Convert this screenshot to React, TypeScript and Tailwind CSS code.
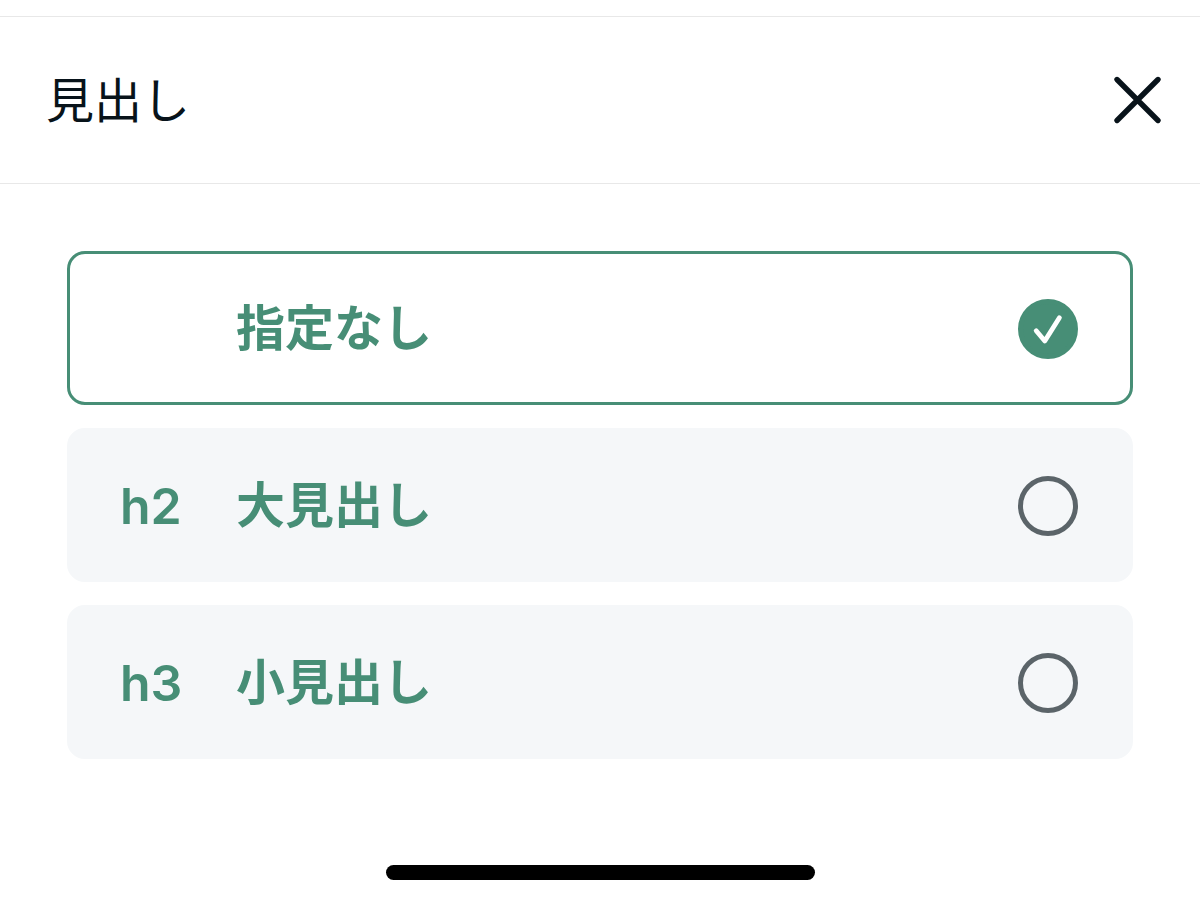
import { useState } from 'react'

const options = [
  { value: 'none', tag: '', label: '指定なし' },
  { value: 'h2', tag: 'h2', label: '大見出し' },
  { value: 'h3', tag: 'h3', label: '小見出し' }
]

export default function App() {
  const [selected, setSelected] = useState('none')
  const [open, setOpen] = useState(true)

  if (!open) return null

  return (
    <div className="flex min-h-screen flex-col bg-white pt-4 font-['Inter','Noto_Sans_CJK_JP',sans-serif]">
      <header className="flex h-[168px] items-center justify-between border-y border-[#e8e8e8] pr-8 pl-[46px]">
        <h1 className="pt-0.5 text-[48px] leading-[72px] font-normal text-[#08131a]">見出し</h1>
        <button type="button" aria-label="閉じる" onClick={() => setOpen(false)}>
          <svg viewBox="0 0 62 62" className="size-[62px]" fill="none" stroke="#08131a" strokeWidth="5.4" strokeLinecap="round">
            <path d="M11 10.5 52 51.5M52 10.5 11 51.5" />
          </svg>
        </button>
      </header>

      <main className="flex flex-col gap-[23px] px-[67px] pt-[67px]">
        {options.map(option => {
          const checked = selected === option.value

          return (
            <label
              key={option.value}
              className={`flex h-[154px] cursor-pointer items-center rounded-[18px] border-3 pt-0.5 pr-[52px] pl-[50px] leading-[72px] text-[#478e76] ${
                checked ? 'border-[#478e76] bg-white' : 'border-[#f5f7f9] bg-[#f5f7f9]'
              }`}
            >
              <span className="w-[116px] text-[50px] font-semibold">{option.tag}</span>
              <span className="flex-1 text-[49px] font-bold">{option.label}</span>
              <span className="grid place-items-center">
                <input
                  type="radio"
                  name="heading"
                  value={option.value}
                  checked={checked}
                  onChange={() => setSelected(option.value)}
                  className="col-start-1 row-start-1 size-[60px] appearance-none rounded-full border-5 border-[#5b6469] checked:border-[#478e76] checked:bg-[#478e76]"
                />
                {checked && (
                  <svg
                    viewBox="0 0 60 60"
                    className="pointer-events-none col-start-1 row-start-1 size-[60px]"
                    fill="none"
                    stroke="white"
                    strokeWidth="4.8"
                    strokeLinecap="round"
                    strokeLinejoin="round"
                  >
                    <path d="M18.2 31.8 26.8 42 41.4 18.8" />
                  </svg>
                )}
              </span>
            </label>
          )
        })}
      </main>

      <footer className="mt-auto flex justify-center pt-10 pb-[22px]">
        <div className="h-[15px] w-[429px] rounded-full bg-black" />
      </footer>
    </div>
  )
}
